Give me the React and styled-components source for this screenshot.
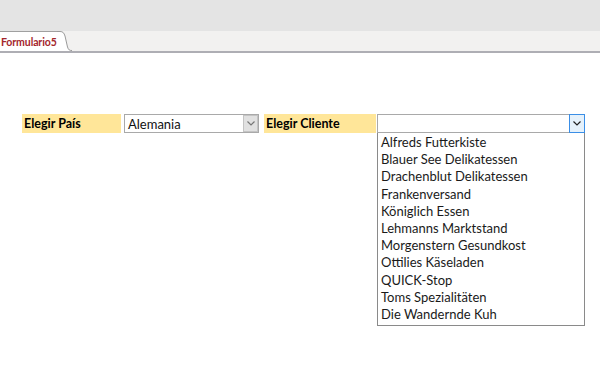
import React from 'react'
import styled, { createGlobalStyle } from 'styled-components'

const GlobalStyle = createGlobalStyle`
    body {
        margin: 0;
        background: #fff;
        font-family: Lato, "Open Sans", sans-serif;
    }
`

const Page = styled.div`
    width: 600px;
    height: 380px;
    overflow: hidden;
    background: #fff;
`

const TopBar = styled.div`
    height: 31px;
    background: #e4e4e4;
`

const TabStrip = styled.div`
    display: flex;
    align-items: flex-end;
    height: 20px;
    background: #f2f1f0;
    border-bottom: 2px solid #aeaeb4;
`

const Tab = styled.div`
    height: 20px;
    padding: 0 0 0 1px;
    display: flex;
    align-items: center;
    background: #fff;
    border-top: 1px solid #a0a0a0;
    box-sizing: border-box;
    color: #a4262c;
    font-size: 10.5px;
    font-weight: 700;
    letter-spacing: -0.1px;
`

const TabEdge = styled.svg`
    display: block;
    width: 15px;
    height: 20px;
`

const Form = styled.div`
    padding: 61px 0 0 22px;
    display: flex;
    align-items: flex-start;
`

const Label = styled.div`
    width: ${p => p.$w}px;
    height: 19px;
    margin-right: ${p => p.$gap}px;
    background: #ffe699;
    box-sizing: border-box;
    padding: 0 2px;
    display: flex;
    align-items: center;
    font-size: 12.5px;
    font-weight: 700;
    color: #000;
`

const ComboWrap = styled.div`
    position: relative;
    width: ${p => p.$w}px;
    margin-right: ${p => p.$gap}px;
`

const Combo = styled.div`
    height: 19px;
    display: flex;
    align-items: stretch;
    border: 1px solid #a9a9a9;
    box-sizing: border-box;
    background: #fff;
`

const ComboText = styled.div`
    flex: 1;
    padding-left: 3px;
    display: flex;
    align-items: center;
    font-size: 13px;
    color: #111;
`

const ComboButton = styled.div`
    display: flex;
    align-items: center;
    justify-content: center;
    box-sizing: border-box;
    background: ${p => (p.$active ? '#e5f1fb' : '#e1e1e1')};
    border: 1px solid ${p => (p.$active ? '#3a8ee6' : '#c4c4c4')};
    margin: ${p => (p.$active ? '-1px -1px -1px 0' : '0')};
    width: ${p => (p.$active ? '16px' : '15px')};
`

const List = styled.div`
    position: absolute;
    top: 19px;
    left: 0;
    right: 0;
    background: #fff;
    border: 1px solid #8a8a8a;
    border-top: none;
    box-sizing: border-box;
    padding: 1px 0 2px;
`

const Item = styled.div`
    height: 17.2px;
    line-height: 17.2px;
    padding-left: 3px;
    font-size: 13px;
    color: #1a1a1a;
    white-space: nowrap;
`

const Chevron = ({ color }) => (
    <svg width="8" height="5" viewBox="0 0 8 5">
        <path d="M0.5 0.5 L4 4 L7.5 0.5" fill="none" stroke={color} strokeWidth="1.2" />
    </svg>
)

const clientes = [
    'Alfreds Futterkiste',
    'Blauer See Delikatessen',
    'Drachenblut Delikatessen',
    'Frankenversand',
    'Königlich Essen',
    'Lehmanns Marktstand',
    'Morgenstern Gesundkost',
    'Ottilies Käseladen',
    'QUICK-Stop',
    'Toms Spezialitäten',
    'Die Wandernde Kuh',
]

export default function App() {
    return (
        <Page>
            <GlobalStyle />
            <TopBar />
            <TabStrip>
                <Tab>Formulario5</Tab>
                <TabEdge viewBox="0 0 15 20">
                    <path d="M0 0.5 L3 0.5 C6 0.5 7 2 8 5 L10.5 16 C11.5 19 12.5 20 15 20 L0 20 Z" fill="#fff" />
                    <path d="M0 0.5 L3 0.5 C6 0.5 7 2 8 5 L10.5 16 C11.5 19 12.5 19.5 15 19.5" fill="none" stroke="#9a9a9a" strokeWidth="1" />
                </TabEdge>
            </TabStrip>
            <Form>
                <Label $w={99} $gap={3}>Elegir País</Label>
                <ComboWrap $w={135} $gap={5}>
                    <Combo>
                        <ComboText>Alemania</ComboText>
                        <ComboButton>
                            <Chevron color="#777" />
                        </ComboButton>
                    </Combo>
                </ComboWrap>
                <Label $w={112} $gap={1}>Elegir Cliente</Label>
                <ComboWrap $w={208} $gap={0}>
                    <Combo>
                        <ComboText />
                        <ComboButton $active>
                            <Chevron color="#222" />
                        </ComboButton>
                    </Combo>
                    <List>
                        {clientes.map(c => (
                            <Item key={c}>{c}</Item>
                        ))}
                    </List>
                </ComboWrap>
            </Form>
        </Page>
    )
}
